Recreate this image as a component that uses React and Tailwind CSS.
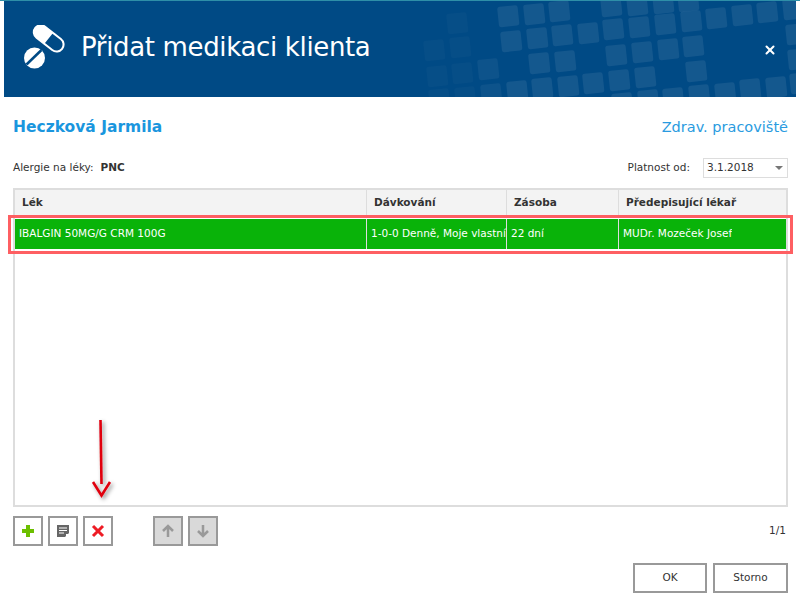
import { X, ChevronDown } from 'lucide-react';

const squares = [
  [508,16],[534,14],[559,11],[611,6],[637,5],[663,3],[688,1],[457,23],[665,24],[639,27],[613,29],[588,33],[562,35],[537,38],[511,41],
  [691,21],[716,18],[742,15],[767,12],[793,9],[460,47],[434,50],[693,46],[668,49],[642,52],[616,55],[565,61],[539,63],[796,34],[798,59],
  [488,69],[462,73],[437,76],[696,71],[645,77],[619,80],[593,83],[568,86],[542,88],[517,91],[491,94],[465,97],[439,99],
  [776,87],[750,89],[725,93],[699,95],[673,98],[648,100],[622,103],[800,83],
];

function HeaderPattern() {
  return (
    <svg className="absolute inset-0" width="792" height="96" viewBox="4 1 792 96">
      {squares.map(([x, y]) => (
        <rect
          key={`${x}-${y}`}
          x={x - 10}
          y={y - 10}
          width="20.5"
          height="20.5"
          rx="2.5"
          fill="#fff"
          opacity={x < 480 ? 0.025 : x < 500 ? 0.05 : 0.08}
          transform={`rotate(-6 ${x} ${y})`}
        />
      ))}
    </svg>
  );
}

function PillIcon() {
  return (
    <svg width="42" height="44" viewBox="0 0 42 44" className="shrink-0">
      <g transform="rotate(38 25 13)">
        <rect x="7" y="5.5" width="36" height="16" rx="8" fill="#fff" />
        <path d="M25 7.5h10a6 6 0 0 1 0 12H25z" fill="#004a85" />
      </g>
      <circle cx="10.5" cy="33" r="10.5" fill="#fff" />
      <path d="M2.5 39.5L17.5 25" stroke="#004a85" strokeWidth="2.5" />
    </svg>
  );
}

function ToolButton({ disabled, children }) {
  return (
    <button className={`w-[30px] h-[30px] border-2 border-[#999999] flex items-center justify-center ${disabled ? 'bg-[#d9d9d9]' : 'bg-white'}`}>
      {children}
    </button>
  );
}

const columns = [
  { title: 'Lék', value: 'IBALGIN 50MG/G CRM 100G', width: 'w-[351px]' },
  { title: 'Dávkování', value: '1-0-0 Denně, Moje vlastní', width: 'w-[140px]' },
  { title: 'Zásoba', value: '22 dní', width: 'w-[112px]' },
  { title: 'Předepisující lékař', value: 'MUDr. Mozeček Josef', width: 'flex-1' },
];

export default function App() {
  return (
    <div className="relative w-[800px] h-[602px] bg-white overflow-hidden text-[10.5px] text-[#333333] font-['DejaVu_Sans',sans-serif]">
      <div className="h-px bg-[#2e8fa8]" />
      <div className="relative mx-1 h-[96px] bg-[#004a85] overflow-hidden flex items-center pl-5 text-white">
        <HeaderPattern />
        <div className="relative flex items-center gap-[15px] -mt-[5px]">
          <PillIcon />
          <h1 className="text-[26px] leading-none tracking-[-0.35px]">Přidat medikaci klienta</h1>
        </div>
        <X size={14} strokeWidth={3.5} className="absolute right-[19px] top-[42px]" />
      </div>

      <div className="px-[13px] pr-3">
        <div className="flex items-center justify-between h-[22px] mt-5">
          <h2 className="text-[15.5px] font-bold text-[#1a96de]">Heczková Jarmila</h2>
          <span className="text-[14.5px] text-[#2a9be0]">Zdrav. pracoviště</span>
        </div>

        <div className="flex items-center justify-between h-5 mt-[19px]">
          <div className="flex gap-[7px]">
            <span>Alergie na léky:</span>
            <span className="font-bold">PNC</span>
          </div>
          <div className="flex items-center gap-[13px]">
            <span>Platnost od:</span>
            <div className="w-[85px] h-5 border border-[#dddddd] flex items-center justify-between pl-[3px] pr-[3px]">
              <span>3.1.2018</span>
              <ChevronDown size={0} />
              <span className="w-0 h-0 mr-[1px] border-x-[4px] border-x-transparent border-t-[4px] border-t-[#777777]" />
            </div>
          </div>
        </div>

        <div className="mt-[10px] h-[319px] border-2 border-[#dddddd] border-b-2">
          <div className="flex h-[25px] bg-[#f3f3f3] font-bold">
            {columns.map((c, i) => (
              <div key={c.title} className={`${c.width} flex items-center pl-[7px] ${i > 0 ? 'border-l border-[#dddddd]' : ''}`}>
                {c.title}
              </div>
            ))}
          </div>
          <div className="flex h-[30px] mt-[4px] bg-[#09b309] text-white">
            {columns.map((c, i) => (
              <div key={c.title} className={`${c.width} flex items-center pl-[4px] overflow-hidden ${i > 0 ? 'border-l border-[#dddddd]' : ''}`}>
                <span className="truncate">{c.value}</span>
              </div>
            ))}
          </div>
        </div>

        <div className="flex items-center mt-[9px]">
          <div className="flex gap-[5px]">
            <ToolButton>
              <svg width="14" height="14" viewBox="0 0 14 14"><path d="M5 1h4v4h4v4H9v4H5V9H1V5h4z" fill="#6cbf00" transform="translate(0 0)" /></svg>
            </ToolButton>
            <ToolButton>
              <svg width="14" height="14" viewBox="0 0 14 14"><path d="M1 1h12v8l-4 4H1z" fill="#666666" /><path d="M3 4h8M3 6.5h8M3 9h5" stroke="#fff" strokeWidth="1" /><path d="M10 13V10h3z" fill="#fff" /></svg>
            </ToolButton>
            <ToolButton>
              <svg width="14" height="14" viewBox="0 0 14 14"><path d="M2 2l10 10M12 2L2 12" stroke="#ee1c25" strokeWidth="3" /></svg>
            </ToolButton>
          </div>
          <div className="flex gap-[5px] ml-10">
            <ToolButton disabled>
              <svg width="14" height="14" viewBox="0 0 14 14"><path d="M7 13V2M2 7l5-5 5 5" fill="none" stroke="#999999" strokeWidth="2.5" /></svg>
            </ToolButton>
            <ToolButton disabled>
              <svg width="14" height="14" viewBox="0 0 14 14"><path d="M7 1v11M2 7l5 5 5-5" fill="none" stroke="#999999" strokeWidth="2.5" /></svg>
            </ToolButton>
          </div>
          <span className="ml-auto mr-[2px]">1/1</span>
        </div>

        <div className="flex justify-end gap-[6px] mt-[17px]">
          <button className="w-[74px] h-[30px] border-2 border-[#999999]">OK</button>
          <button className="w-[75px] h-[30px] border-2 border-[#999999]">Storno</button>
        </div>
      </div>

      {/* red annotation around the selected row */}
      <div className="absolute left-[8px] top-[215px] w-[785px] h-[39px] border-[3px] border-[#fe5f62]" />
      <svg className="absolute left-[85px] top-[415px]" width="36" height="90" viewBox="0 0 36 90">
        <defs>
          <filter id="arrow-shadow" x="-50%" y="-10%" width="200%" height="130%">
            <feDropShadow dx="2" dy="2" stdDeviation="2" floodColor="#000" floodOpacity="0.45" />
          </filter>
        </defs>
        <g filter="url(#arrow-shadow)" fill="none" stroke="#e00010" strokeWidth="2.6">
          <path d="M15.5 5l1 64" />
          <path d="M8 67l8.5 13.5L25 67" />
        </g>
      </svg>
    </div>
  );
}
